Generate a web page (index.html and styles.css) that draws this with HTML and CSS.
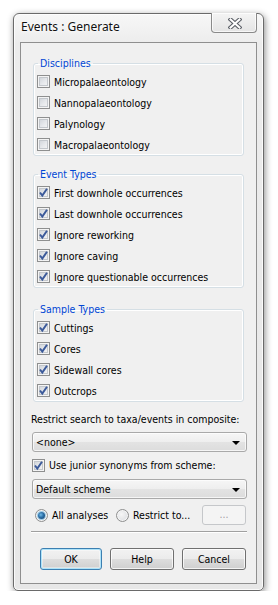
FILE: index.html
```html
<!DOCTYPE html>
<html>
<head>
<meta charset="utf-8">
<title>Events : Generate</title>
<link rel="stylesheet" href="styles.css">
</head>
<body>
<div class="window">
  <div class="titlebar">
    <span class="title">Events : Generate</span>
    <div class="close">
      <svg width="14" height="11" viewBox="0 0 14 11">
        <path d="M2.5 1.5 L11.5 9.5 M11.5 1.5 L2.5 9.5" stroke="#5b5f66" stroke-width="4.2" stroke-linecap="square" fill="none"/>
        <path d="M2.5 1.5 L11.5 9.5 M11.5 1.5 L2.5 9.5" stroke="#ffffff" stroke-width="2" stroke-linecap="square" fill="none"/>
      </svg>
    </div>
  </div>
  <div class="client">
    <fieldset class="group first">
      <legend>Disciplines</legend>
      <div class="row"><span class="cb"></span><span>Micropalaeontology</span></div>
      <div class="row"><span class="cb"></span><span>Nannopalaeontology</span></div>
      <div class="row"><span class="cb"></span><span>Palynology</span></div>
      <div class="row"><span class="cb"></span><span>Macropalaeontology</span></div>
    </fieldset>
    <fieldset class="group second">
      <legend>Event Types</legend>
      <div class="row"><span class="cb on"><svg width="11" height="11" viewBox="0 0 11 11"><path d="M2 5.5 L4.3 8.5 L9 1.8" stroke="#3c5a9a" stroke-width="2" fill="none"/></svg></span><span>First downhole occurrences</span></div>
      <div class="row"><span class="cb on"><svg width="11" height="11" viewBox="0 0 11 11"><path d="M2 5.5 L4.3 8.5 L9 1.8" stroke="#3c5a9a" stroke-width="2" fill="none"/></svg></span><span>Last downhole occurrences</span></div>
      <div class="row"><span class="cb on"><svg width="11" height="11" viewBox="0 0 11 11"><path d="M2 5.5 L4.3 8.5 L9 1.8" stroke="#3c5a9a" stroke-width="2" fill="none"/></svg></span><span>Ignore reworking</span></div>
      <div class="row"><span class="cb on"><svg width="11" height="11" viewBox="0 0 11 11"><path d="M2 5.5 L4.3 8.5 L9 1.8" stroke="#3c5a9a" stroke-width="2" fill="none"/></svg></span><span>Ignore caving</span></div>
      <div class="row"><span class="cb on"><svg width="11" height="11" viewBox="0 0 11 11"><path d="M2 5.5 L4.3 8.5 L9 1.8" stroke="#3c5a9a" stroke-width="2" fill="none"/></svg></span><span>Ignore questionable occurrences</span></div>
    </fieldset>
    <fieldset class="group third">
      <legend>Sample Types</legend>
      <div class="row"><span class="cb on"><svg width="11" height="11" viewBox="0 0 11 11"><path d="M2 5.5 L4.3 8.5 L9 1.8" stroke="#3c5a9a" stroke-width="2" fill="none"/></svg></span><span>Cuttings</span></div>
      <div class="row"><span class="cb on"><svg width="11" height="11" viewBox="0 0 11 11"><path d="M2 5.5 L4.3 8.5 L9 1.8" stroke="#3c5a9a" stroke-width="2" fill="none"/></svg></span><span>Cores</span></div>
      <div class="row"><span class="cb on"><svg width="11" height="11" viewBox="0 0 11 11"><path d="M2 5.5 L4.3 8.5 L9 1.8" stroke="#3c5a9a" stroke-width="2" fill="none"/></svg></span><span>Sidewall cores</span></div>
      <div class="row"><span class="cb on"><svg width="11" height="11" viewBox="0 0 11 11"><path d="M2 5.5 L4.3 8.5 L9 1.8" stroke="#3c5a9a" stroke-width="2" fill="none"/></svg></span><span>Outcrops</span></div>
    </fieldset>
    <div class="label">Restrict search to taxa/events in composite:</div>
    <div class="combo combo1"><span>&lt;none&gt;</span><span class="arrow"></span></div>
    <div class="row junior"><span class="cb on"><svg width="11" height="11" viewBox="0 0 11 11"><path d="M2 5.5 L4.3 8.5 L9 1.8" stroke="#3c5a9a" stroke-width="2" fill="none"/></svg></span><span>Use junior synonyms from scheme:</span></div>
    <div class="combo combo2"><span>Default scheme</span><span class="arrow"></span></div>
    <div class="radios">
      <div class="opt opt1"><span class="radio sel"></span><span>All analyses</span></div>
      <div class="opt"><span class="radio"></span><span>Restrict to...</span></div>
      <div class="dots">...</div>
    </div>
    <div class="sep"></div>
    <div class="buttons">
      <div class="btn ok">OK</div>
      <div class="btn help">Help</div>
      <div class="btn cancel">Cancel</div>
    </div>
  </div>
</div>
</body>
</html>
```
FILE: styles.css
```css
html, body {
  margin: 0;
  padding: 0;
  background: #ffffff;
}
body {
  font-family: "DejaVu Sans Condensed", "DejaVu Sans", sans-serif;
  font-size: 10.5px;
  color: #000;
}
.window {
  margin: 13px 0 0 13px;
  width: 251px;
  height: 578px;
  box-sizing: border-box;
  border: 1px solid #6a6a6a;
  border-radius: 6px 6px 5px 5px;
  background: linear-gradient(#f7f7f7 0, #ececec 30px, #e7e7e7 100%);
  box-shadow: 1px 2px 7px rgba(0,0,0,0.45), inset 0 0 0 1px rgba(255,255,255,0.8);
  padding: 0 6px 6px 6px;
  display: flex;
  flex-direction: column;
}
.titlebar {
  height: 28px;
  display: flex;
  justify-content: space-between;
  align-items: flex-start;
  flex: none;
}
.title {
  font-family: "Noto Sans", "Open Sans", sans-serif;
  font-size: 12px;
  line-height: 16px;
  margin: 5px 0 0 1px;
  color: #111;
  text-shadow: 0 0 6px #fff, 0 0 3px #fff;
}
.close {
  width: 46px;
  height: 20px;
  margin-top: -1px;
  box-sizing: border-box;
  border: 1px solid #8a8a8a;
  border-top: none;
  border-radius: 0 0 4px 4px;
  background: linear-gradient(#f4f4f4, #e4e4e4);
  box-shadow: inset 0 0 0 1px rgba(255,255,255,0.7);
  display: flex;
  align-items: center;
  justify-content: center;
}
.close svg { margin: 1px 0 0 1px; }
.client {
  flex: 1;
  background: #f0f0f0;
  border: 1px solid #8f8f8f;
  padding: 0 9px 0 11px;
  display: flex;
  flex-direction: column;
}
.group {
  margin: 0 3px 0 1px;
  padding: 1px 0 0 3px;
  border: 1px solid #d5dfe5;
  border-radius: 3px;
  box-shadow: inset 0 0 0 1px #fff;
  min-width: 0;
}
.group.first { margin-top: 13px; }
.group.second { margin-top: 11px; }
.group.third { margin-top: 14px; }
.group legend {
  color: #0046d5;
  line-height: 14px;
  padding: 0 2px;
  margin-left: 1px;
}
.row {
  display: flex;
  align-items: center;
  height: 21px;
  gap: 4px;
  white-space: nowrap;
}
.cb {
  width: 13px;
  height: 13px;
  box-sizing: border-box;
  border: 1px solid #8e8f8f;
  background: linear-gradient(135deg, #c9ced4 0, #e7e9ec 55%, #f7f7f7 100%);
  box-shadow: inset 0 0 0 1px #f4f4f4, inset 0 0 0 2px #c3c7cc;
  flex: none;
  display: flex;
  align-items: center;
  justify-content: center;
}
.cb svg { display: block; }
.label {
  margin-top: 10px;
  line-height: 14px;
  margin-left: -1px;
  white-space: nowrap;
}
.combo {
  height: 20px;
  box-sizing: border-box;
  border: 1px solid #a9a9a9;
  border-radius: 3px;
  background: linear-gradient(#f6f6f6 0, #eeeeee 50%, #e3e3e3 51%, #dcdcdc 100%);
  box-shadow: inset 0 0 0 1px rgba(255,255,255,0.7);
  display: flex;
  align-items: center;
  justify-content: space-between;
  padding: 0 6px 0 3px;
}
.combo1 { margin-top: 6px; }
.combo2 { margin-top: 4px; }
.arrow {
  width: 0;
  height: 0;
  border-left: 4px solid transparent;
  border-right: 4px solid transparent;
  border-top: 4px solid #000;
  margin-top: 2px;
}
.junior { margin-top: 3px; height: 20px; }
.radios {
  margin-top: 6px;
  height: 20px;
  display: flex;
  align-items: center;
}
.opt {
  display: flex;
  align-items: center;
  gap: 4px;
  white-space: nowrap;
}
.opt1 { width: 81px; margin-left: 3px; }
.radio {
  width: 13px;
  height: 13px;
  box-sizing: border-box;
  border-radius: 50%;
  border: 1px solid #8e8f8f;
  background: radial-gradient(circle at 40% 40%, #f6f6f6 0, #dfe1e4 70%, #cfd2d6 100%);
  box-shadow: inset 0 0 0 1px #f4f4f4;
  flex: none;
  position: relative;
}
.radio.sel::after {
  content: "";
  position: absolute;
  left: 2px;
  top: 2px;
  width: 7px;
  height: 7px;
  border-radius: 50%;
  background: radial-gradient(circle at 40% 40%, #6fb9e6 0, #2a6fa8 45%, #184d7c 80%);
  box-shadow: 0 0 0 1px #9ccbe8;
}
.dots {
  margin-left: auto;
  margin-right: 1px;
  width: 44px;
  height: 20px;
  box-sizing: border-box;
  border: 1px solid #c5c7ca;
  border-radius: 3px;
  background: #f4f4f4;
  color: #a0a0a0;
  display: flex;
  align-items: center;
  justify-content: center;
  padding-bottom: 2px;
}
.sep {
  margin-top: 6px;
  margin-left: -1px;
  height: 1px;
  background: #a0a0a0;
  border-bottom: 1px solid #ffffff;
}
.buttons {
  margin-top: 15px;
  display: flex;
  justify-content: flex-end;
  gap: 8px;
  margin-right: 1px;
}
.btn {
  height: 22px;
  box-sizing: border-box;
  border: 1px solid #707070;
  border-radius: 3px;
  background: linear-gradient(#f2f2f2 0, #ebebeb 50%, #dddddd 51%, #cfcfcf 100%);
  box-shadow: inset 0 0 0 1px rgba(255,255,255,0.75);
  display: flex;
  align-items: center;
  justify-content: center;
}
.ok {
  width: 62px;
  border-color: #3c7fb1;
  box-shadow: inset 0 0 0 1px #aee3f9, inset 0 0 0 2px rgba(255,255,255,0.4);
}
.help { width: 64px; }
.cancel { width: 64px; }
```
